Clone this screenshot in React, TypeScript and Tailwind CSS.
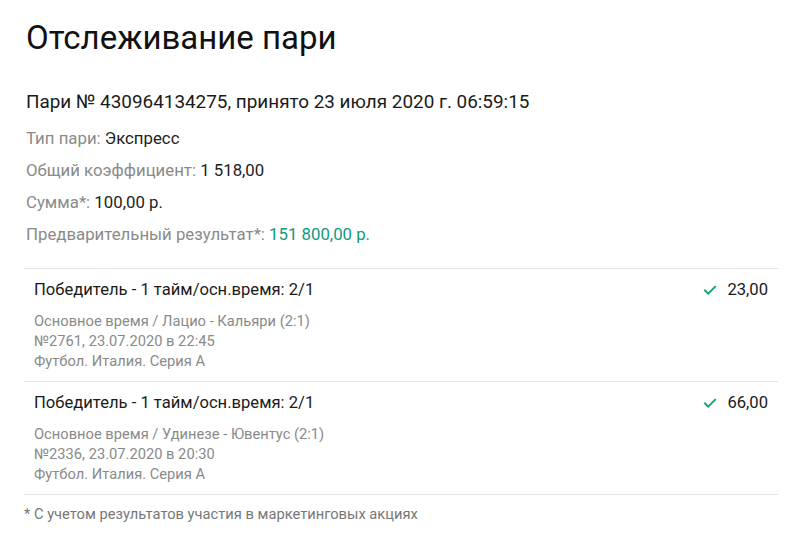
import { FC } from "react";

type Leg = {
  market: string;
  event: string;
  number: string;
  league: string;
  odds: string;
};

const legs: Leg[] = [
  {
    market: "Победитель - 1 тайм/осн.время: 2/1",
    event: "Основное время / Лацио - Кальяри (2:1)",
    number: "№2761, 23.07.2020 в 22:45",
    league: "Футбол. Италия. Серия А",
    odds: "23,00",
  },
  {
    market: "Победитель - 1 тайм/осн.время: 2/1",
    event: "Основное время / Удинезе - Ювентус (2:1)",
    number: "№2336, 23.07.2020 в 20:30",
    league: "Футбол. Италия. Серия А",
    odds: "66,00",
  },
];

const Check: FC = () => (
  <svg width="14" height="14" viewBox="0 0 14 14" fill="none">
    <path
      d="M2 7.5l3.2 3.2L12 3.8"
      stroke="#13a57c"
      strokeWidth="2"
      strokeLinecap="square"
    />
  </svg>
);

const InfoRow: FC<{ label: string; value: string; accent?: boolean }> = ({
  label,
  value,
  accent,
}) => (
  <p className="h-[32px] leading-[32px] text-[16.8px] text-[#8a8a8a]">
    {label}{" "}
    <span className={accent ? "text-[#0f9a7c]" : "text-[#222]"}>{value}</span>
  </p>
);

const App: FC = () => {
  return (
    <div
      className="w-[800px] h-[536px] bg-white px-[24px] pt-[15px] overflow-hidden"
      style={{ fontFamily: "Roboto, 'Noto Sans', sans-serif" }}
    >
      <h1 className="pl-[2px] text-[33px] leading-[46px] text-[#111] font-normal">
        Отслеживание пари
      </h1>
      <p className="pl-[2px] mt-[29px] text-[18.9px] leading-[24px] text-[#1a1a1a]">
        Пари № 430964134275, принято 23 июля 2020 г. 06:59:15
      </p>
      <div className="pl-[2px] mt-[8px]">
        <InfoRow label="Тип пари:" value="Экспресс" />
        <InfoRow label="Общий коэффициент:" value="1 518,00" />
        <InfoRow label="Сумма*:" value="100,00 р." />
        <InfoRow label="Предварительный результат*:" value="151 800,00 р." accent />
      </div>
      <div className="mt-[18px] w-[754px] border-t border-[#e4e4e4]">
        {legs.map((leg, i) => (
          <div
            key={i}
            className="flex justify-between h-[113px] border-b border-[#e4e4e4] pl-[10px] pr-[10px] pt-[10px]"
          >
            <div>
              <p className="text-[16.6px] leading-[22px] text-[#1a1a1a]">
                {leg.market}
              </p>
              <div className="mt-[10px] text-[14.7px] leading-[20px] text-[#8a8a8a]">
                <p>{leg.event}</p>
                <p>{leg.number}</p>
                <p>{leg.league}</p>
              </div>
            </div>
            <div className="flex items-start gap-[10px] text-[16.6px] leading-[22px] text-[#1a1a1a]">
              <span className="mt-[4px]">
                <Check />
              </span>
              <span>{leg.odds}</span>
            </div>
          </div>
        ))}
      </div>
      <p className="mt-[10px] text-[14.7px] leading-[18px] text-[#777]">
        * С учетом результатов участия в маркетинговых акциях
      </p>
    </div>
  );
};

export default App;
